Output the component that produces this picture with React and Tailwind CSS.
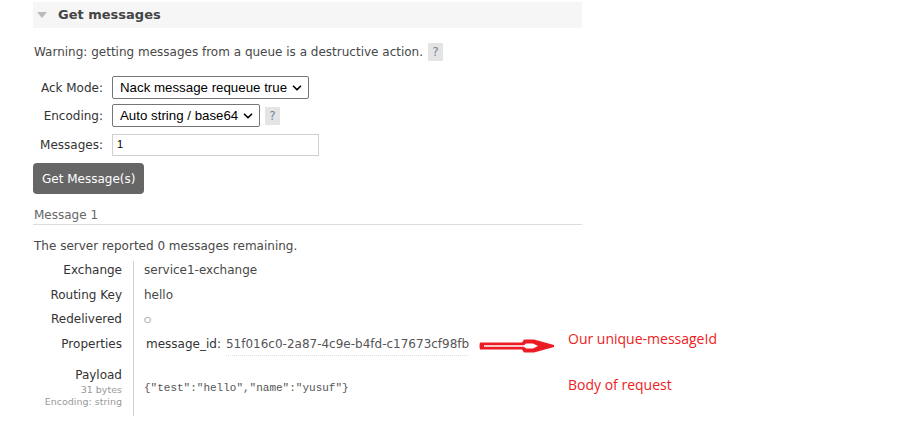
import { ChevronDown } from 'lucide-react'

function Help() {
  return (
    <span className="inline-flex h-[18px] w-[15px] items-center justify-center bg-[#e4e4e4] text-[12px] text-[#7684a0]">?</span>
  )
}

function Select({ value, width }) {
  return (
    <div
      className={`flex h-[23px] items-center justify-between rounded-[2px] border border-[#767676] bg-white pl-[7px] pr-[4px] text-[13.3px] text-black ${width}`}
      style={{ fontFamily: '"Liberation Sans", Arial, sans-serif' }}
    >
      <span>{value}</span>
      <ChevronDown className="h-[14px] w-[14px]" strokeWidth={3} />
    </div>
  )
}

function Row({ label, children, sub }) {
  return (
    <div className="flex">
      <div className="w-[100px] shrink-0 pr-[11px] text-right text-[#333]">
        {label}
        {sub}
      </div>
      <div className="border-l border-[#d0d0d0] pl-[10px]">{children}</div>
    </div>
  )
}

export default function App() {
  return (
    <div className="relative min-h-screen bg-white text-[12px] text-[#484848]" style={{ fontFamily: '"DejaVu Sans", Verdana, sans-serif' }}>
      <div className="w-[582px] pl-[33px] pt-[2px]">
        <div className="flex h-[26px] items-center bg-[#f6f6f6] pl-[3px]">
          <span className="ml-[1px] mr-[11px] h-0 w-0 border-x-[5px] border-t-[6px] border-x-transparent border-t-[#bbb]" />
          <span className="text-[13px] font-bold text-[#444]">Get messages</span>
        </div>

        <div className="mt-[15px] flex items-center gap-[5px] pl-[1px]">
          <span>Warning: getting messages from a queue is a destructive action.</span>
          <Help />
        </div>

        <div className="mt-[15px] grid grid-cols-[79px_auto] items-center gap-y-[5px] text-[#333]">
          <div className="pr-[9px] text-right">Ack Mode:</div>
          <Select value="Nack message requeue true" width="w-[197px]" />
          <div className="pr-[9px] text-right">Encoding:</div>
          <div className="flex items-center gap-[5px]">
            <Select value="Auto string / base64" width="w-[148px]" />
            <Help />
          </div>
          <div className="mt-[2px] pr-[9px] text-right">Messages:</div>
          <div className="mt-[2px] flex h-[22px] w-[207px] items-start border border-[#cfcfcf] bg-white pl-[4px] pt-[1px] text-[11px] text-black" style={{ fontFamily: '"Liberation Sans", Arial, sans-serif' }}>1</div>
        </div>

        <button className="mt-[7px] flex h-[31px] items-center rounded-[4px] bg-[#666] px-[9px] text-[12px] text-white">
          Get Message(s)
        </button>

        <div className="mt-[12px] border-b border-[#ddd] pl-[1px] text-[#666]">Message 1</div>

        <div className="mt-[12px] pl-[1px]">The server reported 0 messages remaining.</div>

        <div className="mt-[6px] flex flex-col">
          <Row label={<div>Exchange</div>}>
            <div className="h-[25px]">service1-exchange</div>
          </Row>
          <Row label={<div>Routing Key</div>}>
            <div className="h-[24px]">hello</div>
          </Row>
          <Row label={<div>Redelivered</div>}>
            <div className="h-[25px] pt-[4px] text-[8px]">○</div>
          </Row>
          <Row label={<div>Properties</div>}>
            <div className="flex h-[23px] items-start pl-[2px]">
              <span className="pr-[5px] text-[#333]">message_id:</span>
              <span className="border-b border-dotted border-[#e0e0e0] pb-[2px] text-[#555]">51f016c0-2a87-4c9e-b4fd-c17673cf98fb</span>
            </div>
          </Row>
          <Row
            label={<div className="pt-[8px]">Payload</div>}
            sub={
              <div className="pb-[8px] text-[9.5px] leading-[12px] text-[#999]">
                <div>31 bytes</div>
                <div>Encoding: string</div>
              </div>
            }
          >
            <div className="pt-[22px] text-[11px] text-[#555]" style={{ fontFamily: '"Liberation Mono", monospace' }}>
              {'{"test":"hello","name":"yusuf"}'}
            </div>
          </Row>
        </div>
      </div>

      <svg className="absolute left-[478px] top-[337px]" width="78" height="18" viewBox="0 0 78 18">
        <path d="M2 5.5 Q1 9 2 12.5 L44 12.5 L46 15.5 L56 15.5 L76 10 L76 8 L56 2.5 L46 2.5 L44 5.5 Z" fill="#ec1c24" />
        <path d="M6 8.3 L46 8.3 L48 6.5 L55 6.5 L60 9 L55 11.5 L48 11.5 L46 9.7 L6 9.7 Z" fill="white" />
      </svg>
      <div className="absolute left-[568px] top-[328px] text-[14px] text-[#ec1c24]" style={{ fontFamily: '"Open Sans", sans-serif' }}>Our unique-messageId</div>
      <div className="absolute left-[568px] top-[374px] text-[14px] text-[#ec1c24]" style={{ fontFamily: '"Open Sans", sans-serif' }}>Body of request</div>
    </div>
  )
}
